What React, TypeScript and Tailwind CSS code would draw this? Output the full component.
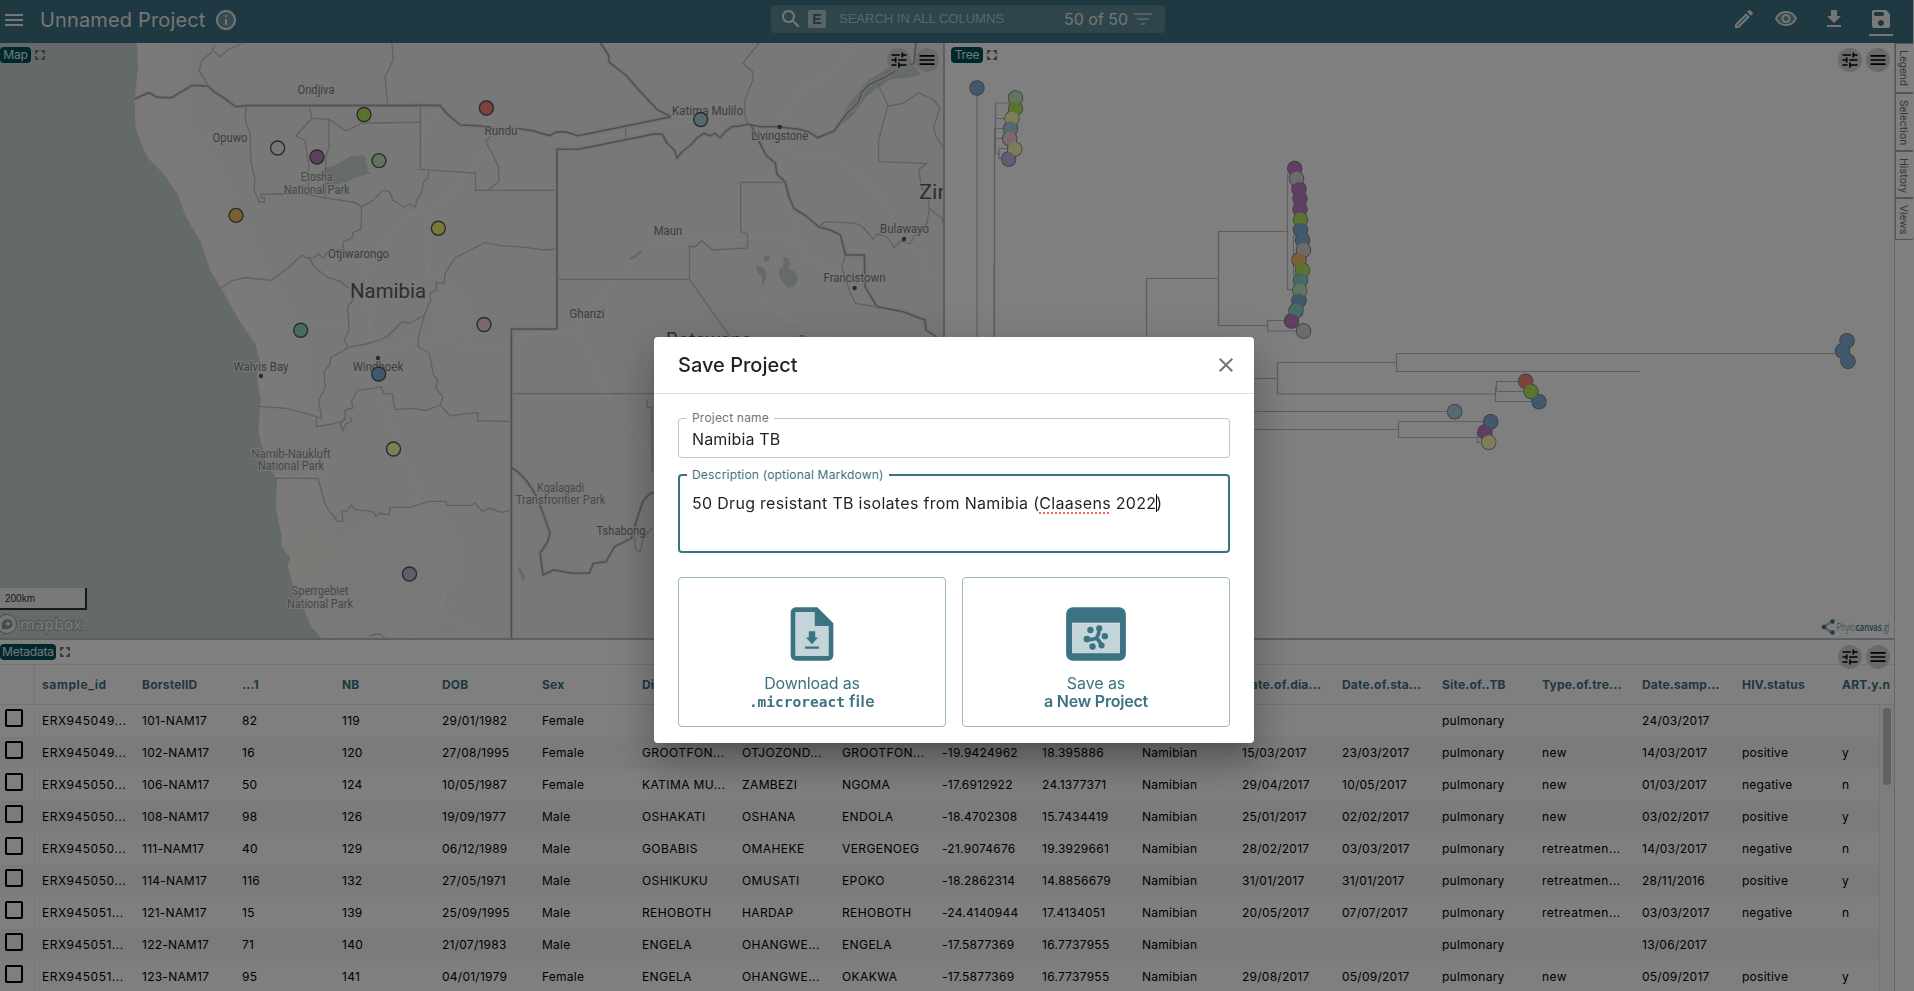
import React from "react";

const C = {
  purple: "#bd7ec4",
  grey: "#d8d8d8",
  green: "#b4e65e",
  blue: "#84b2da",
  orange: "#fabc6a",
  teal: "#8cd6c6",
  pale: "#c6e6c4",
  sky: "#aad2e2",
  pink: "#f8d0e6",
  lemon: "#fafab0",
  gold: "#fbec78",
  lavender: "#bebae0",
  red: "#fa857c",
};

/* ---------- icons ---------- */
type IconProps = { className?: string; children: React.ReactNode };
const Icon = ({ className = "size-6", children }: IconProps) => (
  <svg viewBox="0 0 24 24" fill="currentColor" className={`shrink-0 ${className}`}>
    {children}
  </svg>
);
const MenuIcon = ({ className }: { className?: string }) => (
  <Icon className={className}>
    <path d="M3 18h18v-2H3v2zm0-5h18v-2H3v2zm0-7v2h18V6H3z" />
  </Icon>
);
const TuneIcon = ({ className }: { className?: string }) => (
  <Icon className={className}>
    <path d="M3 17v2h6v-2H3zM3 5v2h10V5H3zm10 16v-2h8v-2h-8v-2h-2v6h2zM7 9v2H3v2h4v2h2V9H7zm14 4v-2H11v2h10zm-6-4h2V7h4V5h-4V3h-2v6z" />
  </Icon>
);
const FullscreenIcon = () => (
  <Icon className="size-4 text-[#777]">
    <path d="M4.500 4.500h5.500v2.900H7.400V10H4.500V4.500zm9.500 0h5.500V10h-2.900V7.400H14V4.500zM4.500 14h2.900v2.600H10v2.900H4.500V14zm12.100 0h2.900v5.500H14v-2.900h2.600V14z" />
  </Icon>
);

/* ---------- data ---------- */
const columns = [
  "sample_id", "BorstelID", "...1", "NB", "DOB", "Sex", "District", "Region", "Village", "Latitude", "Longitude",
  "Nationality", "Date.of.dia...", "Date.of.sta...", "Site.of..TB", "Type.of.tre...", "Date.samp...", "HIV.status", "ART.y.n",
];
const rows: string[][] = [
  ["ERX945049...", "101-NAM17", "82", "119", "29/01/1982", "Female", "", "", "", "", "", "", "", "", "pulmonary", "", "24/03/2017", "", ""],
  ["ERX945049...", "102-NAM17", "16", "120", "27/08/1995", "Female", "GROOTFON...", "OTJOZOND...", "GROOTFON...", "-19.9424962", "18.395886", "Namibian", "15/03/2017", "23/03/2017", "pulmonary", "new", "14/03/2017", "positive", "y"],
  ["ERX945050...", "106-NAM17", "50", "124", "10/05/1987", "Female", "KATIMA MU...", "ZAMBEZI", "NGOMA", "-17.6912922", "24.1377371", "Namibian", "29/04/2017", "10/05/2017", "pulmonary", "new", "01/03/2017", "negative", "n"],
  ["ERX945050...", "108-NAM17", "98", "126", "19/09/1977", "Male", "OSHAKATI", "OSHANA", "ENDOLA", "-18.4702308", "15.7434419", "Namibian", "25/01/2017", "02/02/2017", "pulmonary", "new", "03/02/2017", "positive", "y"],
  ["ERX945050...", "111-NAM17", "40", "129", "06/12/1989", "Male", "GOBABIS", "OMAHEKE", "VERGENOEG", "-21.9074676", "19.3929661", "Namibian", "28/02/2017", "03/03/2017", "pulmonary", "retreatmen...", "14/03/2017", "negative", "n"],
  ["ERX945050...", "114-NAM17", "116", "132", "27/05/1971", "Male", "OSHIKUKU", "OMUSATI", "EPOKO", "-18.2862314", "14.8856679", "Namibian", "31/01/2017", "31/01/2017", "pulmonary", "retreatmen...", "28/11/2016", "positive", "y"],
  ["ERX945051...", "121-NAM17", "15", "139", "25/09/1995", "Male", "REHOBOTH", "HARDAP", "REHOBOTH", "-24.4140944", "17.4134051", "Namibian", "20/05/2017", "07/07/2017", "pulmonary", "retreatmen...", "03/03/2017", "negative", "n"],
  ["ERX945051...", "122-NAM17", "71", "140", "21/07/1983", "Male", "ENGELA", "OHANGWE...", "ENGELA", "-17.5877369", "16.7737955", "Namibian", "", "", "pulmonary", "", "13/06/2017", "", ""],
  ["ERX945051...", "123-NAM17", "95", "141", "04/01/1979", "Female", "ENGELA", "OHANGWE...", "OKAKWA", "-17.5877369", "16.7737955", "Namibian", "29/08/2017", "05/09/2017", "pulmonary", "new", "05/09/2017", "positive", "y"],
];

/* ---------- shared panel parts ---------- */
const PanelTab = ({ label, className }: { label: string; className: string }) => (
  <div className="flex items-center gap-[1px]">
    <div className={`flex h-4 items-center justify-center rounded bg-[#004d5c] text-xs tracking-[-0.2px] text-[#e8eeee] ${className}`}>{label}</div>
    <FullscreenIcon />
  </div>
);
const PanelButtons = () => (
  <div className="flex gap-1 text-black">
    {[TuneIcon, MenuIcon].map((I, i) => (
      <div key={i} className="flex size-6 items-center justify-center rounded-full bg-[#d4d4d4]">
        <I className="size-5" />
      </div>
    ))}
  </div>
);

/* ---------- header ---------- */
const Header = () => (
  <header className="flex h-[43px] shrink-0 items-start bg-[#3c7383] text-[#eaeaea]">
    <div className="flex h-[39px] w-[771px] items-center pl-[2px]">
      <MenuIcon />
      <h1 className="ml-[14px] w-[174px] text-xl leading-none tracking-[0.150px] whitespace-nowrap">Unnamed Project</h1>
      <Icon>
        <circle cx="12" cy="12" r="9" opacity=".3" />
        <path d="M11 7h2v2h-2zm0 4h2v6h-2zm1-9C6.480 2 2 6.480 2 12s4.480 10 10 10 10-4.480 10-10S17.520 2 12 2zm0 18c-4.410 0-8-3.590-8-8s3.590-8 8-8 8 3.590 8 8-3.590 8-8 8z" />
      </Icon>
    </div>
    <div className="mt-[5px] flex h-7 w-[394px] items-center rounded bg-[#5c8b96] pl-2">
      <Icon>
        <path d="M15.500 14h-.790l-.280-.270C15.410 12.590 16 11.110 16 9.500 16 5.910 13.090 3 9.500 3S3 5.910 3 9.500 5.910 16 9.500 16c1.610 0 3.090-.590 4.230-1.570l.270.280v.790l5 4.990L20.490 19l-4.990-5zm-6 0C7.010 14 5 11.990 5 9.500S7.010 5 9.500 5 14 7.010 14 9.500 11.990 14 9.500 14z" />
      </Icon>
      <div className="ml-[5px] flex size-[18px] items-center justify-center rounded-xs bg-[#b4c8cd] font-['Liberation_Sans'] text-sm font-bold text-[#3f6e7b]">E</div>
      <span className="ml-[13px] w-[225px] font-['Liberation_Sans'] text-[13px] whitespace-nowrap text-[#b4cbd1]">SEARCH IN ALL COLUMNS</span>
      <span className="w-[67px] text-base whitespace-nowrap">50 of 50</span>
      <Icon className="size-6 text-[#a9c1c7]">
        <path d="M10 18h4v-2h-4v2zM3 6v2h18V6H3zm3 7h12v-2H6v2z" />
      </Icon>
    </div>
    <div className="ml-auto flex pr-5 pt-[7px]">
      <Icon className="mr-[18px] size-6">
        <path d="M5 18.080V19h.920l9.060-9.060-.920-.920z" opacity=".3" />
        <path d="M20.710 7.040c.390-.390.390-1.020 0-1.410l-2.340-2.340c-.200-.200-.450-.290-.710-.290s-.510.100-.700.290l-1.830 1.830 3.750 3.750 1.830-1.830zM3 17.250V21h3.750L17.810 9.940l-3.750-3.750L3 17.250zM5.920 19H5v-.920l9.060-9.060.920.920L5.920 19z" />
      </Icon>
      <Icon className="mr-6 size-6">
        <path d="M12 6c-3.790 0-7.170 2.130-8.820 5.500C4.830 14.870 8.210 17 12 17s7.170-2.130 8.820-5.500C19.170 8.130 15.790 6 12 6z" opacity=".3" />
        <path d="M12 4C7 4 2.730 7.110 1 11.500 2.730 15.890 7 19 12 19s9.270-3.110 11-7.500C21.270 7.110 17 4 12 4zm0 13c-3.790 0-7.170-2.130-8.820-5.500C4.830 8.130 8.210 6 12 6s7.170 2.130 8.820 5.500C19.170 14.870 15.790 17 12 17zm0-10c-2.480 0-4.500 2.020-4.500 4.500S9.520 16 12 16s4.500-2.020 4.500-4.500S14.480 7 12 7zm0 7c-1.380 0-2.500-1.120-2.500-2.500S10.620 9 12 9s2.500 1.120 2.500 2.500S13.380 14 12 14z" />
      </Icon>
      <Icon className="mr-[23px] size-6">
        <path d="M19 9h-4V3H9v6H5l7 7 7-7zM5 18v2h14v-2H5z" />
      </Icon>
      <div className="flex h-[29px] w-6 flex-col border-b-2 border-[#eaeaea] text-[#f4f4f4]">
        <Icon>
          <path d="M17 3H5c-1.110 0-2 .900-2 2v14c0 1.100.890 2 2 2h14c1.100 0 2-.900 2-2V7l-4-4zm-5 16c-1.660 0-3-1.340-3-3s1.340-3 3-3 3 1.340 3 3-1.340 3-3 3zm1.500-10h-7a1.500 1.500 0 0 1-1.500-1.500v-1A1.500 1.500 0 0 1 6.500 5h7A1.500 1.500 0 0 1 15 6.500v1A1.500 1.500 0 0 1 13.500 9z" />
        </Icon>
      </div>
    </div>
  </header>
);

/* ---------- map ---------- */
const COAST =
  "137,43 138,67 134.700,100 135.500,127 141,143 148,158 163,173 178,195 186,217 201,242 210,270 221,288 230.600,305 240,322 256,345 260,363 256.800,377 260.500,400 258.400,433 266,460 277,480 275.700,507 281,533 282,547 290.400,558 287.500,565 293.400,587 303,607 311.500,627 321,638";

const adminLines = [
  "215.5,45 212,50 220.400,56.700 228.600,49 235,47 241,44",
  "212,52 202,60 199,71 204,78 208,85",
  "392,43 393,60 389,69 385,76.700 387.800,105.300",
  "247,106 245,115 246,123 250,133 251,163 255,178 254,190 258.400,200 258.400,202 264.500,202 264.500,198 261,198 261,194.300 281.600,194 306,194 326.500,198.300 340,200 355,202.700 361.600,206.700 361,229.300 353,232.300 352,238 343.700,241.700 343,248",
  "361.600,206.700 373.500,200 383,190 390,192 392.700,200 404,207 410,204 415.500,207 416.500,200 421.600,193 423.500,182 427.800,178 429,170.700",
  "309,105.700 312,118.300 329,119.300 345.700,131 362.400,123 420.400,122.300",
  "312,118.300 296,135.700 305,140.700 307,155 309,167 307,173 309,187",
  "329,119.300 329,146.700 326,157 325.300,198.300",
  "420.400,105 420.400,169.300 475.500,173 475.500,190.300 557,190.300",
  "492,135 485.700,141.700 493,155 498.500,166.700 498.800,181.700 487.800,190.300",
  "220.4,288 232.600,280.700 245,277.700 258,279 271.400,280.300 287.800,268.300 302,255 307,258 314.300,257.700 318.400,253.300 322.400,258.300 328.600,251.700",
  "309,257.700 314.300,266.700 326.500,276.700 340.800,281.700 349,288.300",
  "354,298.300 347.800,306.700 349,330 344,340 348.500,347.300 339,353 330.400,358 330,364 324,371.700 325.400,388 318.600,400 321.600,418.300 303,412.700 286,408.300 259.700,406.300",
  "348.5,347.300 366,344 377,341 387,336.700 396,328 402,321.700 410,323 424.500,315 430.600,300 430,293 436.700,290 436,282.700 444,283 445,273.300 455,258.300 467,251.700 484.500,242.700 502,245.700 526.500,247.700 545,250 557,249",
  "424.5,315 418.800,335 418,346.700 429.300,353.300 433.500,375 438,380 435.600,388 442.800,396.700 440,405 450.400,416 467,413.300 477.700,412.700 478,421 511.400,421.300",
  "440,405 425,410.700 414.600,408.300 394.800,409.300 392.300,394 383.900,393.300 381,386.700 373.800,388.300 357.800,390 351.500,401.700 353,408 345,410 345,420 332.500,424 316.500,426.700 316.500,418.300",
  "345,418 340,424 343,430 346,424 352,421 350,417",
  "275.3,478.300 317.800,478.300 326.200,506.700 338,521.700 343,521 341.800,510 347,512 351.500,505 355,510 372.500,511.700 376,516 380,513 389.300,515 389.800,507.300 410.400,507.300 428.500,501.300 446.200,501.300 446.200,505.300 471.400,505.300 475,503 482,511 490,508.300 500.900,512.300 511.400,510",
  "634.7,536.700 635.600,550 639.800,551.700 644,536.700 652,528",
  "647,399.300 647,407.300 651.600,407 652.400,471.700",
  "511.4,393.700 660,393.700",
  "557,279.300 689.500,279.300 729.800,336.700",
  "689.5,279.300 689.500,246 695,247 701.600,240.700 712.500,250 747.600,248 747.600,235 740.700,230.700 740.700,182.300 785.300,182.300",
  "625.8,126 625.800,139",
  "759,43 742.800,63.300 752.800,71.700 752.800,80 745,100 745,116.700 749,124",
  "877.3,83 888,105 878.600,140 878.600,161.700 927,163.300 918.500,170 921.500,186.700 928.400,200 929.300,208.300 942,218.300 944,228",
  "888,106 903.300,103.300 918.500,92.700 933.600,100 940,108 933.600,126.700 936,137 944,148",
  "818.7,226.700 825,221.700 855.600,223.300 864,228 873,239.300 877,234 887,236.700 893.800,247.300 901,240.700 910,244 914,236.700 927,223.300 929.300,208.300",
  "845.6,255 841.700,266.700 850.400,293.300 855.600,303.300 877,306.700",
  "369,636 376,634 380,634 385,638",
];
const nationLines = [
  "134.7,99 141,96 149,92.700 157,97.300 171.400,97.700 181.600,91.700 192,85.300 208,86 214,91.700 224.500,98.300 235.500,106.700 247,105.500 440,105.300 447,114 460.400,125 481.600,126 500,130 517,128.300 532.500,130.700 550,135.700 556,132 565,131.700 578,135.700 625.800,126 671,116.700",
  "600.6,43 608.400,55 609.300,62.300 625.800,75 638.800,90 657,109.300 671,116.700",
  "511.4,638 511.400,329 557,329 557,149.300 580,149 654,134 662.600,134.300 667,143.300 674.300,150 677,158 683,151 690.800,145 697,138 703.800,133.300 710,136 715,133.300 720,137.700 726,131 732,126.700 740,126 748,124.300 760,126.700 777.500,126.700 799,129.300 809,132 817.400,137.700 834,131 847,113.300 857.800,103.300 862,92 868.600,85 886,76.700 899,69 914,63.300 916,43",
  "750.7,124.300 760,143.300 766,155 775.400,163.300 777,174 785.300,182.300 789,197 794,208.300 806,216 818.700,226.700 830,230 840.400,235 845.600,255 864.300,255 865,286.700 877,306.700 903,311.700 925,320 926,330 938,338 944,345",
  "511.4,467.700 518,472 526,480 532,489 536.700,496.700 543,513 550,533.300 548,541 540,553.300 543,575 553.500,570 571,573 589.300,573.300 593.500,563.300 606,561.700 614.500,546.700 631.400,538.300 637.700,516.700 643,501 650.300,493.300 658,492",
];
const roads = [
  "440,106 425,130 420,150",
  "492,135 470,170 440,205 410,215 385,240 366,270 369,330 378,355 400,345 440,335 470,351 505,345 540,332 580,333 583,318 615,280 655,240 680,240 740,240 770,237 800,242 803,255 840,273",
  "410,215 425,215 428,275 450,285 467,310 465,350",
  "580,333 605,390 650,452",
  "378,355 380,400 398,440 418,490 415,515 428,560 420,565 385,568 360,560 300,562",
  "428,560 448,580 438,620 400,650",
  "448,580 438,616 480,632",
  "779,126 800,90 830,75 857,43",
  "770,137 790,152 840,160 880,195 905,240 925,255 925,275 944,285",
  "780,160 780,180 795,225 795,240",
  "557,137 620,135 671,125 707,119 730,135",
  "760,297 790,320 810,330",
  "261,372 290,340 310,325 348,325",
  "261,380 280,405 300,412",
];

const Label = ({ x, y, w, size = 12, fill = "#7c7c7c", children }: { x: number; y: number; w?: number; size?: number; fill?: string; children: string }) => (
  <text
    x={x} y={y + size * 0.36} fontSize={size} fill={fill} textAnchor="middle" textLength={w} lengthAdjust="spacingAndGlyphs"
    stroke="#f2f2f2" strokeWidth="2" paintOrder="stroke"
  >
    {children}
  </text>
);
const Dot = ({ x, y, fill, r = 7, line = "#555" }: { x: number; y: number; fill: string; r?: number; line?: string }) => (
  <circle cx={x} cy={y} r={r} fill={fill} stroke={line} strokeWidth="1.400" />
);

const mapMarkers: [number, number, string][] = [
  [364, 114.500, C.green], [486.400, 108, C.red], [277.600, 148, "#eeeeee"], [317, 157, C.purple], [379, 160.600, C.pale],
  [236, 215.400, C.orange], [438.400, 228.300, C.gold], [300.700, 330.300, C.teal], [484, 324.500, C.pink],
  [378.700, 374, C.blue], [393.500, 449, C.lemon], [409.500, 574, C.lavender], [700.700, 119.500, C.sky],
];

const MapPanel = () => (
  <section className="relative h-[595px] w-[943px] overflow-hidden bg-[#f1f1f1]">
    <svg viewBox="0 43 943 595" className="block h-full w-full font-['Roboto']">
      <defs>
        <clipPath id="land">
          <polygon points={`${COAST} 943,638 943,43`} />
        </clipPath>
        <filter id="soft" x="-20%" y="-20%" width="140%" height="140%">
          <feGaussianBlur stdDeviation="9" />
        </filter>
      </defs>
      <g clipPath="url(#land)">
        <polyline points={COAST} fill="none" stroke="#f6f5f0" strokeWidth="80" filter="url(#soft)" />
        <polygon points="300,560 430,500 460,560 430,638 310,638" fill="#f4f3ee" filter="url(#soft)" opacity=".8" />
        <polygon points="440,280 470,300 465,340 430,330" fill="#f4f3ee" filter="url(#soft)" opacity=".6" />
        <polygon points="262,405 300,412 330,430 300,480 266,470" fill="#eaeeec" opacity=".7" />
      </g>
      <polygon points={`0,43 ${COAST} 0,638`} fill="#c9d2d4" />
      <g fill="#cbd4d6">
        <polygon points="888,68 914,65 921,74 908,78 892,79 877,88 866,97 853,115 838,128 836,130 847,107 856,95 868,80 882,72" />
        <polygon points="324.5,168 333,166 339,163 346,159 351,156 358,155.500 363,155 366,159 365,163 368,166 367,170 371,174 366,174 361,177 355,177 349,181 343,183 333,185 326,184 323,177" />
        <polygon points="784,257 789,258 790,264 788,268 794,271 798,277 795,286 789,288 786,286 779,277 779,270 783,266" />
        <polygon points="756,265 764,268 767,275 764,283 762,285 762,277 757,272" />
        <circle cx="767" cy="258.500" r="3" />
        <polygon points="629,258 636,254 641,250 643,253 637,258 630,260" />
        <polygon points="520,567 526,578 523,582 518,568" />
      </g>
      <g fill="none" stroke="#f8f8f8" strokeWidth="1.200">
        {roads.map((p) => <polyline key={p} points={p} />)}
      </g>
      <g fill="none" stroke="#c0c0c0" strokeWidth="1.300">
        {adminLines.map((p) => <polyline key={p} points={p} />)}
      </g>
      <g fill="none" stroke="#e4e4e4" strokeWidth="4">
        {nationLines.map((p) => <polyline key={p} points={p} />)}
      </g>
      <g fill="none" stroke="#a0a0a0" strokeWidth="1.500" strokeLinejoin="round">
        {nationLines.map((p) => <polyline key={p} points={p} />)}
      </g>
      <g fill="#555">
        {[[378, 358], [261, 376], [779.700, 127], [904, 239], [854.700, 288]].map(([x, y]) => <circle key={x} cx={x} cy={y} r="2.200" />)}
      </g>
      <Label x={316} y={90} w={37}>Ondjiva</Label>
      <Label x={230} y={137.300} w={35}>Opuwo</Label>
      <Label x={316.700} y={177} w={32} fill="#909090">Etosha</Label>
      <Label x={316.700} y={189.500} w={66} fill="#909090">National Park</Label>
      <Label x={501} y={130.300} w={33}>Rundu</Label>
      <Label x={358.600} y={254} w={61}>Otjiwarongo</Label>
      <Label x={388} y={290} w={76} size={21} fill="#5c5c5c">Namibia</Label>
      <Label x={587} y={314} w={35}>Ghanzi</Label>
      <Label x={261} y={366.300} w={55}>Walvis Bay</Label>
      <Label x={378} y={366.300} w={50.500}>Windhoek</Label>
      <Label x={291} y={453.700} w={79} fill="#909090">Namib-Naukluft</Label>
      <Label x={291} y={466} w={66} fill="#909090">National Park</Label>
      <Label x={560.600} y={487.700} w={47} fill="#909090">Kgalagadi</Label>
      <Label x={560.600} y={500} w={89.500} fill="#909090">Transfrontier Park</Label>
      <Label x={621} y={531} w={49}>Tshabong</Label>
      <Label x={320} y={591} w={57} fill="#909090">Sperrgebiet</Label>
      <Label x={320} y={603.300} w={66} fill="#909090">National Park</Label>
      <Label x={707.500} y={111} w={71}>Katima Mulilo</Label>
      <Label x={779.700} y={136} w={57}>Livingstone</Label>
      <Label x={668} y={231} w={28.500}>Maun</Label>
      <Label x={904.600} y={229} w={49}>Bulawayo</Label>
      <Label x={854.500} y={278} w={62}>Francistown</Label>
      <Label x={817.600} y={340} w={38} fill="#909090">Serowe</Label>
      <Label x={709} y={339.500} w={86} size={21} fill="#5c5c5c">Botswana</Label>
      <Label x={970} y={191.500} w={102} size={21} fill="#5c5c5c">Zimbabwe</Label>
      {mapMarkers.map(([x, y, f]) => <Dot key={x} x={x} y={y} fill={f} />)}
    </svg>
    <div className="absolute top-1 left-0"><PanelTab label="Map" className="w-[31px]" /></div>
    <div className="absolute top-[5px] right-1"><PanelButtons /></div>
    <div className="absolute bottom-7 left-0 h-[22px] w-[87px] border-r-2 border-b-2 border-[#333] bg-[#f1f4f3] pl-[5px] font-['Liberation_Sans'] text-[10px] leading-[21px] text-[#333]">200km</div>
    <svg viewBox="0 0 90 24" className="absolute bottom-[2px] left-0 h-6 w-[90px] font-['Open_Sans']">
      <circle cx="7" cy="12" r="9.500" fill="#efefef" stroke="#8f9799" />
      <path d="M2 17c-1-6 1-10 6-10a5 5 0 0 1 4.500 5c0 4-4 6-10.500 5z" fill="#8f9799" />
      <path d="M8 8.500l1 2.200 2.200 1-2.200 1-1 2.200-1-2.200-2.200-1 2.200-1z" fill="#efefef" />
      <text x="20" y="17.500" fontSize="17" fontWeight="600" textLength="62" lengthAdjust="spacingAndGlyphs" fill="#efefef" stroke="#8f9799" strokeWidth="1.500" paintOrder="stroke">mapbox</text>
    </svg>
  </section>
);

/* ---------- tree ---------- */
const branches =
  "M977 88V340M995.700 103H1009M995.700 103V118.500H1008M994.500 127V340M995.500 110V153.500H999M995 128.500H1005M995 138.500H1005M999 148.500H1008M999 148.500V158.500H1004M994 263V340" +
  "M1287.500 173V289.500H1293M1218.500 231.500H1287.500M1218.500 231.500V325.500H1267.500M1267.500 320.500V331H1300M1267.500 320.500H1290M1146.500 340V278.500H1218.500M1293.500 235V275" +
  "M1254 378.500H1277.500M1277.500 394V362.500H1396.500M1396.500 353.500V371.500H1640M1396.500 353.500H1840M1277.500 394H1495.500M1495.500 386.500V401.500H1534M1496.500 391V381.500H1520M1496.500 391.500H1526" +
  "M1254 411.500H1450M1254 429.500H1398.500M1398.500 421.500V437.500H1477.500M1398.500 421.500H1486M1477.500 432V442.500H1484";
const tips: [number, number, string][] = [
  [977, 88, C.blue],
  [1015.500, 98, C.pale], [1015.500, 108.500, C.green], [1012, 118.500, C.lemon], [1010.500, 128.600, C.sky], [1009.700, 138.800, C.pink], [1014.700, 149, C.lemon], [1008.700, 159, C.lavender],
  [1294.700, 168.500, C.purple], [1296.500, 178.800, C.grey], [1299, 189, C.purple], [1300, 199, C.purple], [1300, 209.200, C.purple], [1300.500, 219.500, C.green],
  [1300.500, 229.700, C.blue], [1302.500, 240, C.blue], [1303.500, 250, C.grey], [1299, 260, C.orange], [1302.500, 270.200, C.green], [1300.500, 280.300, C.teal],
  [1299.700, 290.500, C.pale], [1299, 300.600, C.blue], [1296, 310.800, C.teal], [1291.500, 321, C.purple], [1303.500, 331, C.grey],
  [1525.700, 381.300, C.red], [1531, 391.500, C.green], [1539, 401.700, C.blue], [1454.700, 411.700, C.sky], [1490.700, 421.700, C.blue], [1485, 432, C.purple], [1488.700, 442.300, C.lemon],
  [1847, 340.800, C.blue], [1842.500, 351, C.blue], [1848, 361.300, C.blue],
];
const TreePanel = () => (
  <section className="relative h-[595px] flex-1 overflow-hidden bg-white">
    <svg viewBox="945 43 949 595" className="block h-full w-full">
      <path d={branches} fill="none" stroke="#bcbcbc" strokeWidth="1.200" />
      {tips.map(([x, y], i) => <circle key={i} cx={x} cy={y} r="7.700" fill="#707070" />)}
      {tips.map(([x, y, f], i) => <circle key={i} cx={x} cy={y} r="7" fill={f} />)}
    </svg>
    <div className="absolute top-1 left-[6px]"><PanelTab label="Tree" className="w-8" /></div>
    <div className="absolute top-[5px] right-1"><PanelButtons /></div>
    <svg viewBox="0 0 70 16" className="absolute right-[3px] bottom-[3px] h-4 w-[70px] font-['Open_Sans']">
      <path d="M2.500 8L11 2.500M2.500 8l8.500 5.500" stroke="#a8c4cc" strokeWidth="2.500" />
      <g fill="#3c7383">
        <circle cx="3" cy="8" r="2.300" />
        <circle cx="11.500" cy="2.500" r="2.200" />
        <circle cx="11.500" cy="13.500" r="2.200" />
        <text x="15.500" y="11.500" fontSize="10" fontWeight="300" textLength="53" lengthAdjust="spacingAndGlyphs">
          Phylo<tspan fontWeight="600">canvas</tspan>.gl
        </text>
      </g>
    </svg>
  </section>
);

/* ---------- table ---------- */
const tracking = (i: number) => {
  if (i === 0) return "tracking-[0.5px]";
  if (i >= 6 && i <= 8) return "tracking-[0.4px]";
  if (i === 15) return "tracking-[0.5px]";
  return "tracking-[0.250px]";
};
const TablePanel = () => (
  <section className="flex h-[351px] flex-col overflow-hidden bg-white">
    <div className="flex h-6 shrink-0 items-center justify-between pr-1">
      <PanelTab label="Metadata" className="w-[56px]" />
      <div className="z-10 mt-[10px]"><PanelButtons /></div>
    </div>
    <div className="flex h-[41px] shrink-0 border-y border-[#e6e6e6] text-xs font-bold text-[#3c7383]">
      <div className="w-[35px] shrink-0 border-r border-[#ececec]" />
      {columns.map((c, i) => (
        <div key={i} className={`flex w-[100px] shrink-0 items-center pt-px pl-[7px] whitespace-nowrap ${i === 0 ? "tracking-[0.6px]" : "tracking-[0.2px]"}`}>{c}</div>
      ))}
    </div>
    <div className="flex flex-1">
      <div className="w-[1879px] overflow-hidden">
        {rows.map((r, ri) => (
          <div key={ri} className="flex h-8 overflow-hidden text-xs text-black odd:bg-white even:bg-[#f6f6f6]">
            <div className="w-[35px] shrink-0 border-r border-[#f0f0f0] bg-inherit pt-1 pl-[5px]">
              <div className="size-[18px] rounded-xs border-2 border-black" />
            </div>
            {r.map((v, i) => (
              <div key={i} className={`flex w-[100px] shrink-0 items-center pl-[7px] whitespace-nowrap ${tracking(i)}`}>{v}</div>
            ))}
          </div>
        ))}
      </div>
      <div className="w-[15px] border-l border-[#e8e8e8] bg-[#fafafa] pt-[3px] pl-[3px]">
        <div className="h-[77px] w-2 rounded-full bg-[#c1c1c1]" />
      </div>
    </div>
  </section>
);

const sideTabs: [string, string][] = [
  ["Legend", "h-[50px]"],
  ["Selection", "h-[58px]"],
  ["History", "h-[47px]"],
  ["Views", "h-[42px]"],
];

/* ---------- dialog ---------- */
const SaveDialog = () => (
  <div className="fixed inset-0 z-20 flex items-start justify-center bg-black/50 pt-[337px] pr-[6px]">
    <div className="h-[406px] w-[600px] rounded bg-white text-black/87 shadow-[0_11px_15px_-7px_rgba(0,0,0,.2),0_24px_38px_3px_rgba(0,0,0,.14),0_9px_46px_8px_rgba(0,0,0,.12)]">
      <div className="flex h-[57px] items-center justify-between border-b border-[#e0e0e0] px-6">
        <h2 className="text-xl font-medium">Save Project</h2>
        <svg viewBox="0 0 24 24" className="-mr-[8px] size-6 text-[#757575]" fill="currentColor">
          <path d="M19 6.410L17.590 5 12 10.590 6.410 5 5 6.410 10.590 12 5 17.590 6.410 19 12 13.410 17.590 19 19 17.590 13.410 12z" />
        </svg>
      </div>
      <div className="flex flex-col px-6 pt-6">
        <div className="relative flex h-10 items-center rounded border border-[#c4c4c4] px-[13px] pt-px text-base tracking-[0.150px]">
          <span className="absolute -top-[9px] left-2 bg-white px-[5px] text-xs leading-4 tracking-[0.2px] text-[#757575]">Project name</span>
          Namibia TB
        </div>
        <div className="relative mt-4 flex h-[79px] items-start rounded border-2 border-[#3c7383] px-3 pt-[15px] text-base leading-6 tracking-[0.3px]">
          <span className="absolute -top-[9px] left-[7px] bg-white px-[5px] text-xs leading-4 tracking-[0.2px] text-[#3c7383]">Description (optional Markdown)</span>
          <p className="whitespace-nowrap">
            50 Drug resistant TB isolates from Namibia (
            <span className="underline decoration-[#f0625c] decoration-dotted decoration-2 underline-offset-[3px]">Claasens</span> 2022
            <span className="-mr-px inline-block h-[18px] w-px translate-y-[3px] bg-black" />)
          </p>
        </div>
        <div className="mt-6 grid grid-cols-2 gap-4 text-base leading-[18px] text-[#3c7383]">
          <div className="flex h-[150px] flex-col items-center rounded border border-[#9db9c1] pt-6 text-center">
            <Icon className="size-16">
              <path d="M6 4h7v5h5v11H6z" opacity=".3" />
              <path d="M14 2H6c-1.100 0-2 .900-2 2v16c0 1.100.890 2 2 2h12c1.100 0 2-.900 2-2V8l-6-6zm4.200 18.200H5.800V3.800H13V9h5.200v11.200z" fillRule="evenodd" />
              <path d="M13.200 11h-2.400v2.300H9.700L12 15.800l2.300-2.500h-1.100zM9.400 16.700h5.200v.8H9.400z" />
            </Icon>
            <div className="mt-2 tracking-[-0.2px]">Download as</div>
            <div className="font-semibold"><code className="font-['DejaVu_Sans_Mono',monospace] text-[14.500px] font-bold">.microreact</code> <span className="tracking-[0.5px]">file</span></div>
          </div>
          <div className="flex h-[150px] flex-col items-center rounded border border-[#9db9c1] pt-6 text-center">
            <Icon className="size-16">
              <path d="M3 8h18v12H3z" opacity=".3" />
              <path d="M3.300 2h17.400A2.500 2.500 0 0 1 23.200 4.500v15a2.500 2.500 0 0 1-2.500 2.500H3.300a2.500 2.500 0 0 1-2.500-2.500v-15A2.500 2.500 0 0 1 3.300 2zM3 7.800v11.400h18V7.800z" fillRule="evenodd" />
              <path d="M8.500 14.200Q11 14 12.200 13.600Q13.200 12 13.200 10.300M12.200 13.600Q13.300 14.400 14.100 16.300" fill="none" stroke="currentColor" strokeWidth="1.400" />
              <circle cx="8.600" cy="13.900" r="1.250" />
              <circle cx="13.200" cy="9.900" r="1.150" />
              <circle cx="14.100" cy="16.300" r="1.150" />
              <circle cx="9.900" cy="10.500" r="1.200" />
              <circle cx="15.300" cy="12.800" r="1.200" />
              <circle cx="10.700" cy="16.700" r="1.200" />
            </Icon>
            <div className="mt-2 tracking-[-0.1px]">Save as</div>
            <div className="font-semibold tracking-[-0.2px]">a New Project</div>
          </div>
        </div>
      </div>
    </div>
  </div>
);

export default function App() {
  return (
    <div className="flex h-[991px] w-[1914px] overflow-hidden bg-white font-['Inter',sans-serif]">
      <div className="flex w-[1913px] flex-col">
        <Header />
        <div className="flex flex-1">
          <main className="flex w-[1894px] flex-col">
            <div className="flex h-[597px] border-b-2 border-[#bdbdbd]">
              <MapPanel />
              <div className="w-[2px] bg-[#bdbdbd]" />
              <TreePanel />
            </div>
            <TablePanel />
          </main>
          <aside className="flex w-[19px] flex-col border-l border-[#d0d0d0] bg-white">
            {sideTabs.map(([t, h]) => (
              <div key={t} className={`flex w-[18px] shrink-0 items-start border border-r-0 border-[#a8a8a8] pt-[6px] pr-[2px] font-['Roboto'] text-[11px] leading-[15px] text-[#707070] [writing-mode:vertical-rl] ${h}`}>
                {t}
              </div>
            ))}
          </aside>
        </div>
      </div>
      <div className="w-px bg-[#fff]" />
      <SaveDialog />
    </div>
  );
}
